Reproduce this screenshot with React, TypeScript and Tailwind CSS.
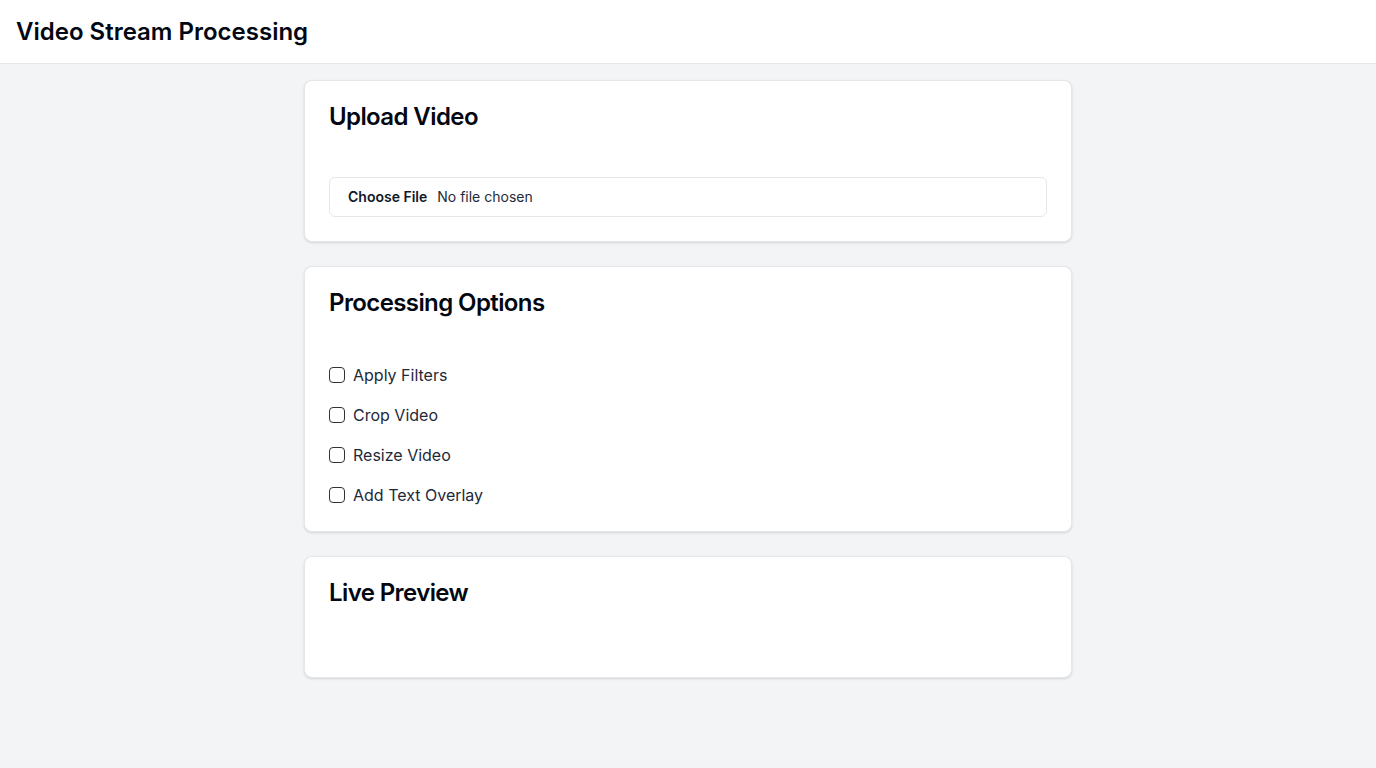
import React from 'react'

const options = ['Apply Filters', 'Crop Video', 'Resize Video', 'Add Text Overlay']

const Card = ({ title, children }: { title: string; children?: React.ReactNode }) => (
  <section className="rounded-lg border border-gray-200 bg-white p-6 shadow-sm">
    <h2 className="mb-12 text-2xl font-semibold leading-6 tracking-tight text-gray-950">{title}</h2>
    {children}
  </section>
)

const App = () => {
  return (
    <div className="min-h-screen bg-gray-100 font-['Inter',sans-serif] text-gray-900">
      <header className="flex h-16 items-center border-b border-gray-200 bg-white px-4">
        <h1 className="text-2xl font-semibold text-gray-950">Video Stream Processing</h1>
      </header>

      <main className="mx-auto mt-4 flex max-w-3xl flex-col gap-6 pb-10">
        <Card title="Upload Video">
          <label className="flex h-10 cursor-pointer items-center rounded-md border border-gray-200 px-[18px] text-sm">
            <input type="file" accept="video/*" className="hidden" />
            <span className="mr-[10px] font-semibold text-gray-900">Choose File</span>
            <span className="text-gray-800">No file chosen</span>
          </label>
        </Card>

        <Card title="Processing Options">
          <div className="flex flex-col gap-4">
            {options.map((opt) => (
              <label key={opt} className="flex h-6 items-center gap-2 text-base text-gray-800">
                <input
                  type="checkbox"
                  className="m-0 h-4 w-4 appearance-none rounded-[4px] border border-[#333] bg-white checked:bg-gray-800"
                />
                {opt}
              </label>
            ))}
          </div>
        </Card>

        <Card title="Live Preview" />
      </main>
    </div>
  )
}

export default App
